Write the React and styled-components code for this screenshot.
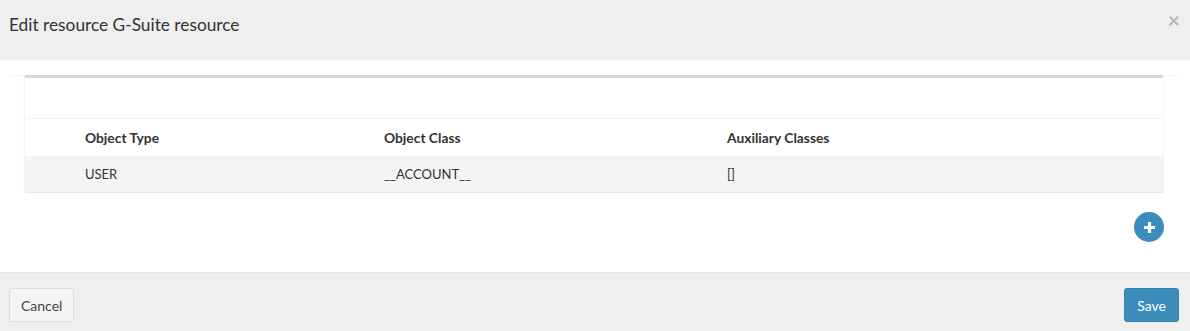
import React from "react"
import styled, { createGlobalStyle } from "styled-components"

const GlobalStyle = createGlobalStyle`
    html, body {
        margin: 0;
        padding: 0;
        background: #fff;
    }
    body {
        font-family: "Lato", "Open Sans", sans-serif;
        color: #333;
    }
`

const Modal = styled.div`
    width: 1190px;
    height: 331px;
    display: flex;
    flex-direction: column;
`

const Header = styled.div`
    height: 60px;
    flex: 0 0 60px;
    background: #efefef;
    display: flex;
    align-items: center;
    justify-content: space-between;
    padding: 0 10px 0 9px;
    box-sizing: border-box;
`

const Title = styled.h4`
    margin: 0 0 12px;
    font-size: 17.3px;
    font-weight: 400;
    color: #333;
`

const Close = styled.span`
    font-size: 21px;
    font-weight: 700;
    color: #b5b5b5;
    margin-bottom: 21px;
    line-height: 1;
`

const Body = styled.div`
    flex: 1;
    background: #fff;
    padding-top: 15px;
    display: flex;
    flex-direction: column;
`

const Panel = styled.div`
    margin: 0 11px 0 9px;
    padding: 0 15px;
    border-top: 1px solid #f4f4f4;
`

const Box = styled.div`
    margin-top: -1px;
    background: #fff;
    border-top: 3px solid #d2d6de;
    border-left: 1px solid #f4f4f4;
    border-right: 1px solid #f4f4f4;
    border-radius: 3px;
    box-shadow: 0 1px 1px rgba(0, 0, 0, 0.1);
`

const BoxHeader = styled.div`
    height: 40px;
    border-bottom: 1px solid #f4f4f4;
`

const Row = styled.div`
    display: grid;
    grid-template-columns: 52px 299px 343px 1fr;
    height: ${(p) => (p.$head ? "37px" : "36px")};
    align-items: center;
    background: ${(p) => (p.$striped ? "#f4f4f4" : "#fff")};
    font-size: ${(p) => (p.$head ? "13.8px" : "13px")};
    font-weight: ${(p) => (p.$head ? 700 : 400)};
    color: #333;
`

const Cell = styled.div`
    padding: 0 8px;
    white-space: nowrap;
`

const AddRow = styled.div`
    display: flex;
    justify-content: flex-end;
    padding: 20px 26px 0 0;
`

const AddButton = styled.button`
    width: 30px;
    height: 30px;
    border-radius: 50%;
    border: none;
    background: #3c8dbc;
    padding: 0;
    display: flex;
    align-items: center;
    justify-content: center;
    cursor: pointer;
`

const Footer = styled.div`
    flex: 0 0 59px;
    background: #efefef;
    border-top: 1px solid #e8e8e8;
    display: flex;
    align-items: flex-start;
    justify-content: space-between;
    padding: 15px 11px 0 9px;
    box-sizing: border-box;
`

const Button = styled.button`
    height: 34px;
    padding: 0 ${(p) => (p.$primary ? "12px" : "11px")};
    font-family: inherit;
    font-size: 14px;
    border-radius: 3px;
    border: 1px solid ${(p) => (p.$primary ? "#367fa9" : "#ddd")};
    background: ${(p) => (p.$primary ? "#3c8dbc" : "#f4f4f4")};
    color: ${(p) => (p.$primary ? "#fff" : "#444")};
    cursor: pointer;
`

export default function App() {
    return (
        <Modal>
            <GlobalStyle />
            <Header>
                <Title>Edit resource G-Suite resource</Title>
                <Close>×</Close>
            </Header>
            <Body>
                <Panel>
                    <Box>
                        <BoxHeader />
                        <Row $head>
                            <Cell />
                            <Cell>Object Type</Cell>
                            <Cell>Object Class</Cell>
                            <Cell>Auxiliary Classes</Cell>
                        </Row>
                        <Row $striped>
                            <Cell />
                            <Cell>USER</Cell>
                            <Cell>__ACCOUNT__</Cell>
                            <Cell>[]</Cell>
                        </Row>
                    </Box>
                </Panel>
                <AddRow>
                    <AddButton aria-label="add">
                        <svg width="13" height="13" viewBox="0 0 13 13">
                            <path d="M6.5 1v11M1 6.5h11" stroke="#fff" strokeWidth="3.2" />
                        </svg>
                    </AddButton>
                </AddRow>
            </Body>
            <Footer>
                <Button>Cancel</Button>
                <Button $primary>Save</Button>
            </Footer>
        </Modal>
    )
}
